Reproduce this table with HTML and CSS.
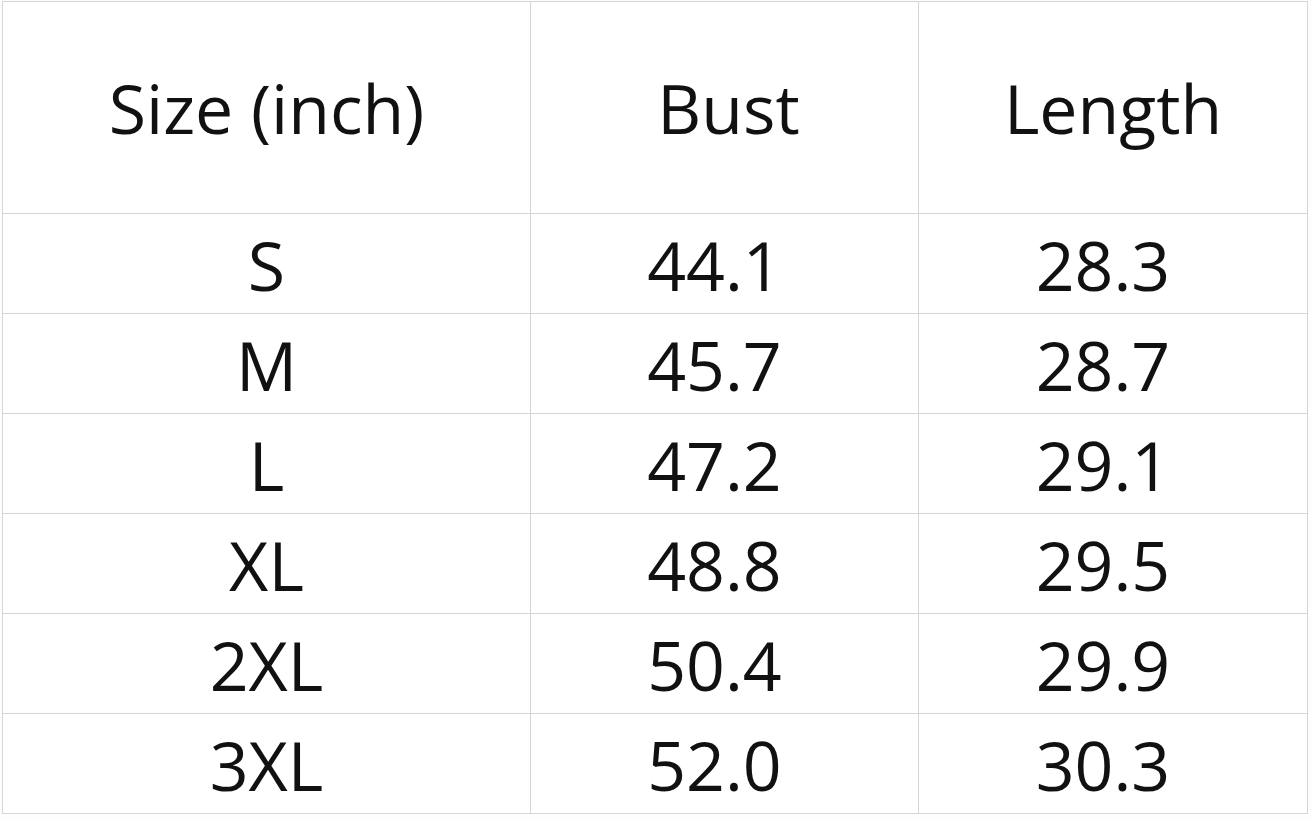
FILE: index.html
```html
<!DOCTYPE html>
<html>
<head>
<meta charset="utf-8">
<link rel="stylesheet" href="styles.css">
</head>
<body>
<table class="size-table">
  <colgroup>
    <col class="c1"><col class="c2"><col class="c3">
  </colgroup>
  <thead>
    <tr class="head"><th>Size (inch)</th><th class="bust">Bust</th><th>Length</th></tr>
  </thead>
  <tbody>
    <tr><td>S</td><td class="num">44.1</td><td class="num">28.3</td></tr>
    <tr><td>M</td><td class="num">45.7</td><td class="num">28.7</td></tr>
    <tr><td>L</td><td class="num">47.2</td><td class="num">29.1</td></tr>
    <tr><td>XL</td><td class="num">48.8</td><td class="num">29.5</td></tr>
    <tr><td>2XL</td><td class="num">50.4</td><td class="num">29.9</td></tr>
    <tr><td>3XL</td><td class="num">52.0</td><td class="num">30.3</td></tr>
  </tbody>
</table>
</body>
</html>
```
FILE: styles.css
```css
html, body {
  margin: 0;
  padding: 0;
  background: #ffffff;
}
body {
  padding: 1px 0 0 2px;
  width: 1312px;
  height: 820px;
  box-sizing: border-box;
  background: #fdfdfd;
}
.size-table {
  border-collapse: collapse;
  table-layout: fixed;
  width: 1305px;
  background: #ffffff;
  font-family: "Open Sans", "Noto Sans", sans-serif;
  color: #111111;
}
.c1 { width: 528px; }
.c2 { width: 388px; }
.c3 { width: 389px; }
.size-table th,
.size-table td {
  border: 1px solid #d6d4d6;
  text-align: center;
  vertical-align: middle;
  padding: 0;
  font-weight: 400;
  font-size: 68px;
  line-height: 1;
  box-sizing: border-box;
}
.size-table .head th {
  height: 212px;
  font-size: 68px;
  padding-top: 0;
}
.size-table .head th.bust {
  padding-left: 8px;
}
.size-table td {
  height: 100px;
  padding-top: 2px;
}
.size-table td.num {
  padding-right: 20px;
}
```
